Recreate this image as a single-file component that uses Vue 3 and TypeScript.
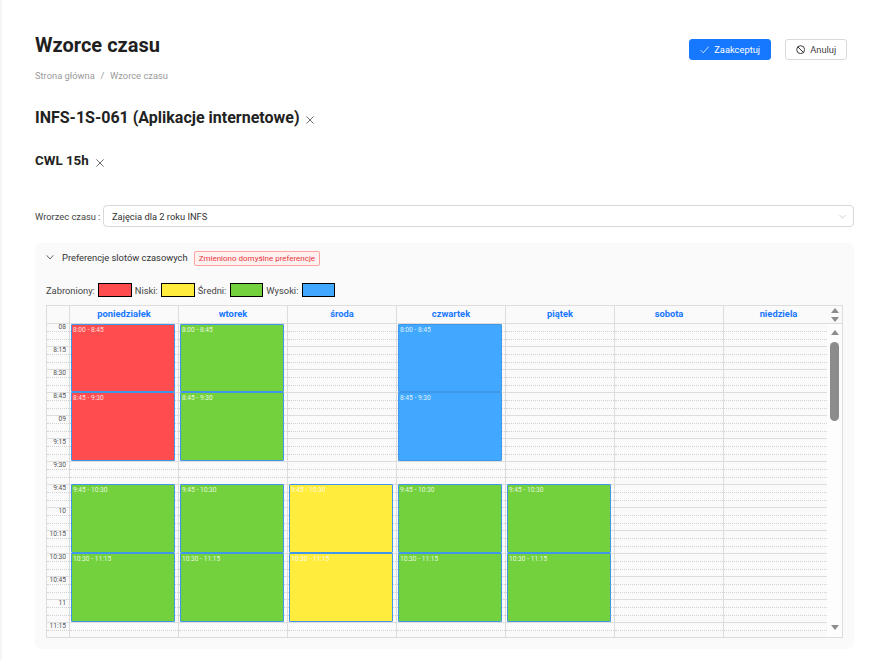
<script setup lang="ts">
type Level = "forbidden" | "low" | "medium" | "high";

type Slot = {
  label: string;
  start: number;
  level: Level;
};

const days = ["poniedziałek", "wtorek", "środa", "czwartek", "piątek", "sobota", "niedziela"];
const times = ["08", "8:15", "8:30", "8:45", "09", "9:15", "9:30", "9:45", "10", "10:15", "10:30", "10:45", "11", "11:15"];

const rowHeight = 23;

const legend: { name: string; level: Level }[] = [
  { name: "Zabroniony:", level: "forbidden" },
  { name: "Niski:", level: "low" },
  { name: "Średni:", level: "medium" },
  { name: "Wysoki:", level: "high" },
];

const blocks = [
  { label: "8:00 - 8:45", start: 0 },
  { label: "8:45 - 9:30", start: 3 },
  { label: "9:45 - 10:30", start: 7 },
  { label: "10:30 - 11:15", start: 10 },
];

const build = (levels: (Level | null)[]): Slot[] =>
  blocks.flatMap((block, i) => {
    const level = levels[i];
    return level ? [{ ...block, level }] : [];
  });

const slotsByDay: Slot[][] = [
  build(["forbidden", "forbidden", "medium", "medium"]),
  build(["medium", "medium", "medium", "medium"]),
  build([null, null, "low", "low"]),
  build(["high", "high", "medium", "medium"]),
  build([null, null, "medium", "medium"]),
  [],
  [],
];

// the first row has no top line, so it is one pixel shorter
const slotStyle = (slot: Slot) => ({
  top: `${slot.start === 0 ? 0 : slot.start * rowHeight - 1}px`,
  height: `${slot.start === 0 ? 68 : 69}px`,
});
</script>

<template>
  <main class="page">
    <header class="top">
      <div>
        <h1 class="title">Wzorce czasu</h1>
        <nav class="crumbs">
          <span>Strona główna</span>
          <span>/</span>
          <span>Wzorce czasu</span>
        </nav>
      </div>
      <div class="actions">
        <button type="button" class="btn primary">
          <svg viewBox="0 0 16 16" class="btn-icon" fill="none" stroke="currentColor" stroke-width="1.3">
            <path d="M1 8.8 5.6 13.4 15 2.6" />
          </svg>
          Zaakceptuj
        </button>
        <button type="button" class="btn">
          <svg viewBox="0 0 16 16" class="btn-icon" fill="none" stroke="#222" stroke-width="1.5">
            <circle cx="8" cy="8" r="6.8" />
            <path d="M3.2 3.2 12.8 12.8" />
          </svg>
          Anuluj
        </button>
      </div>
    </header>

    <div class="heading course">
      <h2>INFS-1S-061 (Aplikacje internetowe)</h2>
      <svg viewBox="0 0 10 10" class="close" fill="none" stroke="currentColor" stroke-width="0.9">
        <path d="M0.5 0.5 9.5 9.5M9.5 0.5 0.5 9.5" />
      </svg>
    </div>
    <div class="heading form">
      <h3>CWL 15h</h3>
      <svg viewBox="0 0 10 10" class="close" fill="none" stroke="currentColor" stroke-width="0.9">
        <path d="M0.5 0.5 9.5 9.5M9.5 0.5 0.5 9.5" />
      </svg>
    </div>

    <div class="pattern">
      <label class="pattern-label">Wrorzec czasu<span class="colon">:</span></label>
      <div class="select">
        <span>Zajęcia dla 2 roku INFS</span>
        <svg viewBox="0 0 12 12" class="select-arrow" fill="none" stroke="currentColor" stroke-width="1.2">
          <path d="M1 3.5 6 9 11 3.5" />
        </svg>
      </div>
    </div>

    <section class="panel">
      <div class="panel-head">
        <svg viewBox="0 0 12 12" class="panel-arrow" fill="none" stroke="currentColor" stroke-width="1.2">
          <path d="M1 3.5 6 9 11 3.5" />
        </svg>
        <span class="panel-title">Preferencje slotów czasowych</span>
        <span class="tag">Zmieniono domyślne preferencje</span>
      </div>

      <div class="legend">
        <template v-for="item in legend" :key="item.level">
          <span>{{ item.name }}</span>
          <span class="swatch" :class="item.level"></span>
        </template>
      </div>

      <div class="calendar">
        <div class="calendar-head">
          <div class="time-col"></div>
          <div v-for="day in days" :key="day" class="day-name">{{ day }}</div>
          <div class="bar-head">
            <span class="arrow up"></span>
            <span class="arrow down"></span>
          </div>
        </div>
        <div class="calendar-body">
          <div class="time-col">
            <div v-for="time in times" :key="time" class="time-row">
              <span class="time-label">{{ time }}</span>
              <i></i>
              <i></i>
            </div>
          </div>
          <div v-for="(slots, d) in slotsByDay" :key="d" class="day">
            <div v-for="time in times" :key="time" class="time-row">
              <i></i>
              <i></i>
            </div>
            <div v-for="slot in slots" :key="slot.start" class="slot" :class="slot.level" :style="slotStyle(slot)">
              {{ slot.label }}
            </div>
          </div>
          <div class="bar">
            <span class="arrow up"></span>
            <span class="thumb"></span>
            <span class="arrow down end"></span>
          </div>
        </div>
      </div>
    </section>
  </main>
</template>

<style scoped>
.page {
  box-sizing: border-box;
  height: 660px;
  overflow: hidden;
  padding: 31px 30px 0 33px;
  border-left: 2px solid #f5f5f5;
  font-family: Roboto, "Liberation Sans", sans-serif;
  color: rgba(0, 0, 0, 0.85);
  background: #fff;
}
.top {
  display: flex;
  justify-content: space-between;
  align-items: flex-start;
}
.title {
  margin: 0;
  font-size: 20px;
  line-height: 28px;
  font-weight: 700;
  color: #1f1f1f;
}
.crumbs {
  display: flex;
  gap: 5.67px;
  margin-top: 10px;
  font-size: 9.33px;
  line-height: 14px;
  color: #9a9a9a;
}
.actions {
  display: flex;
  gap: 14px;
  margin-top: 8px;
  margin-right: 7px;
}
.btn {
  display: flex;
  align-items: center;
  justify-content: center;
  gap: 5px;
  height: 21px;
  width: 62px;
  padding: 0;
  border: 1px solid #d9d9d9;
  border-radius: 3px;
  background: #fff;
  font-family: inherit;
  font-size: 9.33px;
  color: rgba(0, 0, 0, 0.8);
}
.btn.primary {
  width: 82px;
  border-color: #1677ff;
  background: #1677ff;
  color: #fff;
}
.btn-icon {
  width: 9.33px;
  height: 9.33px;
}
.heading {
  display: flex;
  align-items: center;
  gap: 5px;
}
.heading h2,
.heading h3 {
  margin: 0;
  font-weight: 700;
  color: #222;
}
.course {
  margin-top: 24px;
}
.course h2 {
  font-size: 16px;
  line-height: 22px;
}
.form {
  margin-top: 22px;
  gap: 6px;
}
.form h3 {
  font-size: 13.33px;
  line-height: 20px;
}
.close {
  width: 8px;
  height: 8px;
  margin-top: 3px;
  margin-left: 1px;
  color: #333;
}
.pattern {
  display: flex;
  align-items: center;
  gap: 3px;
  margin-top: 34px;
}
.pattern-label {
  flex: none;
  width: 65px;
  white-space: nowrap;
  font-size: 9.33px;
  color: #444;
}
.colon {
  margin-left: 2px;
}
.select {
  flex: 1;
  display: flex;
  align-items: center;
  justify-content: space-between;
  box-sizing: border-box;
  height: 22px;
  padding: 0 7px 0 8px;
  border: 1px solid #d9d9d9;
  border-radius: 4px;
  font-size: 9.33px;
  color: #333;
}
.select-arrow {
  width: 7px;
  height: 7px;
  color: #bdbdbd;
}
.panel {
  margin-top: 16px;
  padding: 0 11px;
  height: 406px;
  box-sizing: border-box;
  background: #fafafa;
  border-radius: 6px;
}
.panel-head {
  display: flex;
  align-items: center;
  height: 28px;
  font-size: 9.33px;
  color: #333;
}
.panel-arrow {
  width: 8px;
  height: 8px;
  margin-right: 8px;
  color: #444;
}
.panel-title {
  margin-right: 6px;
}
.tag {
  box-sizing: border-box;
  height: 15px;
  margin-top: 2px;
  line-height: 13px;
  padding: 0 4px;
  border: 1px solid #ffa39e;
  border-radius: 2px;
  background: #fff1f0;
  color: #e8333a;
  font-size: 8px;
}
.legend {
  display: flex;
  align-items: center;
  gap: 3.33px;
  height: 14px;
  margin-top: 12px;
  font-size: 9.33px;
  color: #444;
}
.swatch {
  box-sizing: border-box;
  width: 33.33px;
  height: 14px;
  border: 1px solid #000;
}
.forbidden {
  background: #ff4d4f;
}
.low {
  background: #ffec3d;
}
.medium {
  background: #73d13d;
}
.high {
  background: #40a9ff;
}
.calendar {
  box-sizing: border-box;
  width: 797px;
  height: 333px;
  margin-top: 8px;
  border: 1px solid #ddd;
  overflow: hidden;
}
.calendar-head {
  position: relative;
  display: flex;
  height: 17px;
  border-bottom: 1px solid #ddd;
}
.time-col {
  flex: none;
  box-sizing: border-box;
  width: 23px;
  border-right: 1px solid #ddd;
}
.day-name {
  flex: none;
  box-sizing: border-box;
  width: 109px;
  border-right: 1px solid #ddd;
  text-align: center;
  font-size: 9.33px;
  line-height: 16px;
  font-weight: 700;
  color: #1677ff;
}
.day-name:nth-last-child(2) {
  border-right: 0;
}
.calendar-body {
  display: flex;
  height: 313px;
}
.day {
  position: relative;
  flex: none;
  box-sizing: border-box;
  width: 109px;
  border-right: 1px solid #ddd;
}
.day:nth-last-child(2) {
  width: 103px;
  border-right: 0;
}
.time-row {
  position: relative;
  box-sizing: border-box;
  height: 23px;
  border-top: 1px solid #ddd;
  padding-top: 7px;
}
.time-row:first-child {
  height: 22px;
  border-top: 0;
}
.time-row i {
  display: block;
  height: 7px;
  border-top: 1px dotted #d2d2d2;
}
.time-label {
  position: absolute;
  top: -1px;
  right: 3px;
  font-size: 6.67px;
  line-height: 8px;
  color: #555;
}
.slot {
  position: absolute;
  left: 1px;
  width: 104px;
  box-sizing: border-box;
  padding: 1px;
  border: 1px solid #4096e8;
  border-radius: 1px;
  font-size: 6.67px;
  line-height: 9px;
  color: rgba(255, 255, 255, 0.85);
}
.bar-head {
  position: absolute;
  top: 2px;
  right: 0;
  width: 15px;
  display: flex;
  flex-direction: column;
  align-items: center;
  gap: 4px;
}
.bar {
  position: relative;
  flex: none;
  box-sizing: border-box;
  width: 15px;
  padding-top: 6px;
  display: flex;
  flex-direction: column;
  align-items: center;
  background: #fdfdfd;
}
.arrow {
  width: 0;
  height: 0;
  border-left: 4.5px solid transparent;
  border-right: 4.5px solid transparent;
}
.arrow.up {
  border-bottom: 5px solid #8c8c8c;
}
.arrow.down {
  border-top: 5px solid #8c8c8c;
}
.arrow.end {
  position: absolute;
  top: 301px;
}
.thumb {
  width: 9px;
  height: 79px;
  margin-top: 7px;
  border-radius: 5px;
  background: #8c8c8c;
}
</style>

<style>
html,
body {
  margin: 0;
  background: #fff;
}
</style>
